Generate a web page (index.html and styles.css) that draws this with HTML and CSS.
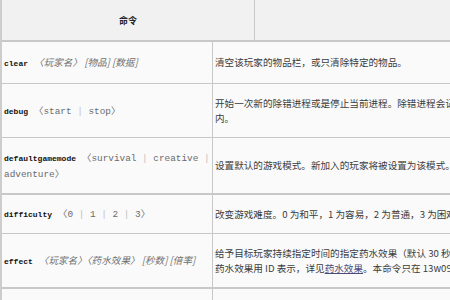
FILE: index.html
```html
<!DOCTYPE html>
<html>
<head>
<meta charset="utf-8">
<link rel="stylesheet" href="styles.css">
</head>
<body>
<div class="tbl">
  <div class="head">
    <div class="hc1">命令</div>
    <div class="hc2"></div>
  </div>
  <div class="row h-clear">
    <div class="c1"><div class="in"><span class="cmd">clear</span> <span class="arg it">〈玩家名〉 [物品] [数据]</span></div></div>
    <div class="c2"><div class="in">清空该玩家的物品栏，或只清除特定的物品。</div></div>
  </div>
  <div class="row h-debug">
    <div class="c1"><div class="in"><span class="cmd">debug</span> <span class="arg">〈start <span class="sep">|</span> stop〉</span></div></div>
    <div class="c2"><div class="in">开始一次新的除错进程或是停止当前进程。除错进程会记录服务器的性能并保存在调试日志文件<br>内。</div></div>
  </div>
  <div class="row h-dgm thick">
    <div class="c1"><div class="in"><span class="cmd">defaultgamemode</span> <span class="arg">〈survival <span class="sep">|</span> creative <span class="sep">|</span><br>adventure〉</span></div></div>
    <div class="c2"><div class="in">设置默认的游戏模式。新加入的玩家将被设置为该模式。</div></div>
  </div>
  <div class="row h-diff">
    <div class="c1"><div class="in"><span class="cmd">difficulty</span> <span class="arg">〈0 <span class="sep">|</span> 1 <span class="sep">|</span> 2 <span class="sep">|</span> 3〉</span></div></div>
    <div class="c2"><div class="in">改变游戏难度。0 为和平，1 为容易，2 为普通，3 为困难。</div></div>
  </div>
  <div class="row h-effect thick">
    <div class="c1"><div class="in"><span class="cmd">effect</span> <span class="arg it">〈玩家名〉〈药水效果〉 [秒数] [倍率]</span></div></div>
    <div class="c2"><div class="in">给予目标玩家持续指定时间的指定药水效果（默认 30 秒）。<br>药水效果用 ID 表示，详见<a class="lnk">药水效果</a>。本命令只在 13w09a 之后可用。</div></div>
  </div>
  <div class="row h-last">
    <div class="c1"></div>
    <div class="c2"></div>
  </div>
</div>
</body>
</html>
```

FILE: styles.css
```css
html, body {
  margin: 0;
  padding: 0;
  background: #ffffff;
  overflow: hidden;
}
body {
  width: 450px;
  height: 300px;
  font-family: "Noto Sans CJK SC", "Liberation Serif", serif;
  color: #3a3a3a;
}
.tbl {
  width: 640px;
  border-left: 2px solid #cdcdcd;
}
.head {
  display: flex;
  height: 40px;
  background: #f1f1f1;
  border-bottom: 2px solid #c8c8c8;
}
.hc1 {
  width: 252px;
  border-right: 1px solid #c8c8c8;
  display: flex;
  align-items: center;
  justify-content: center;
  font-size: 9px;
  font-weight: bold;
  color: #222;
}
.hc2 {
  flex: 1;
}
.row {
  display: grid;
  grid-template-columns: 211px 1fr;
  border-bottom: 1px solid #c8c8c8;
  background: #fafafa;
}
.row.thick {
  border-bottom: 2px solid #c8c8c8;
}
.h-clear { height: 41px; }
.h-debug { height: 53px; }
.h-dgm { height: 55px; }
.h-diff { height: 38px; }
.h-effect { height: 53px; }
.h-last { height: 20px; }
.c1 {
  border-right: 1px solid #c8c8c8;
  padding: 0 2px;
  display: flex;
  align-items: center;
  font-size: 9px;
  line-height: 15px;
}
.c2 {
  padding: 0 2px;
  display: flex;
  align-items: center;
  white-space: nowrap;
  font-size: 9.6px;
  line-height: 15px;
  color: #3c3c3c;
  overflow: hidden;
}
.in {
  display: block;
  line-height: 15px;
}
.cmd {
  font-family: "Liberation Mono", monospace;
  font-weight: bold;
  font-size: 8px;
  line-height: 15px;
  color: #111;
  margin-right: 4px;
}
.arg {
  font-family: "Liberation Mono", "Noto Sans CJK SC", monospace;
  font-size: 9.4px;
  line-height: 15px;
  color: #6a6a6a;
}
.arg.it {
  font-family: "Noto Sans CJK SC", serif;
  font-style: italic;
  font-size: 9.6px;
  color: #707070;
}
.sep {
  color: #c0c0c0;
}
.lnk {
  color: #4b4b7a;
  text-decoration: underline;
}
```
